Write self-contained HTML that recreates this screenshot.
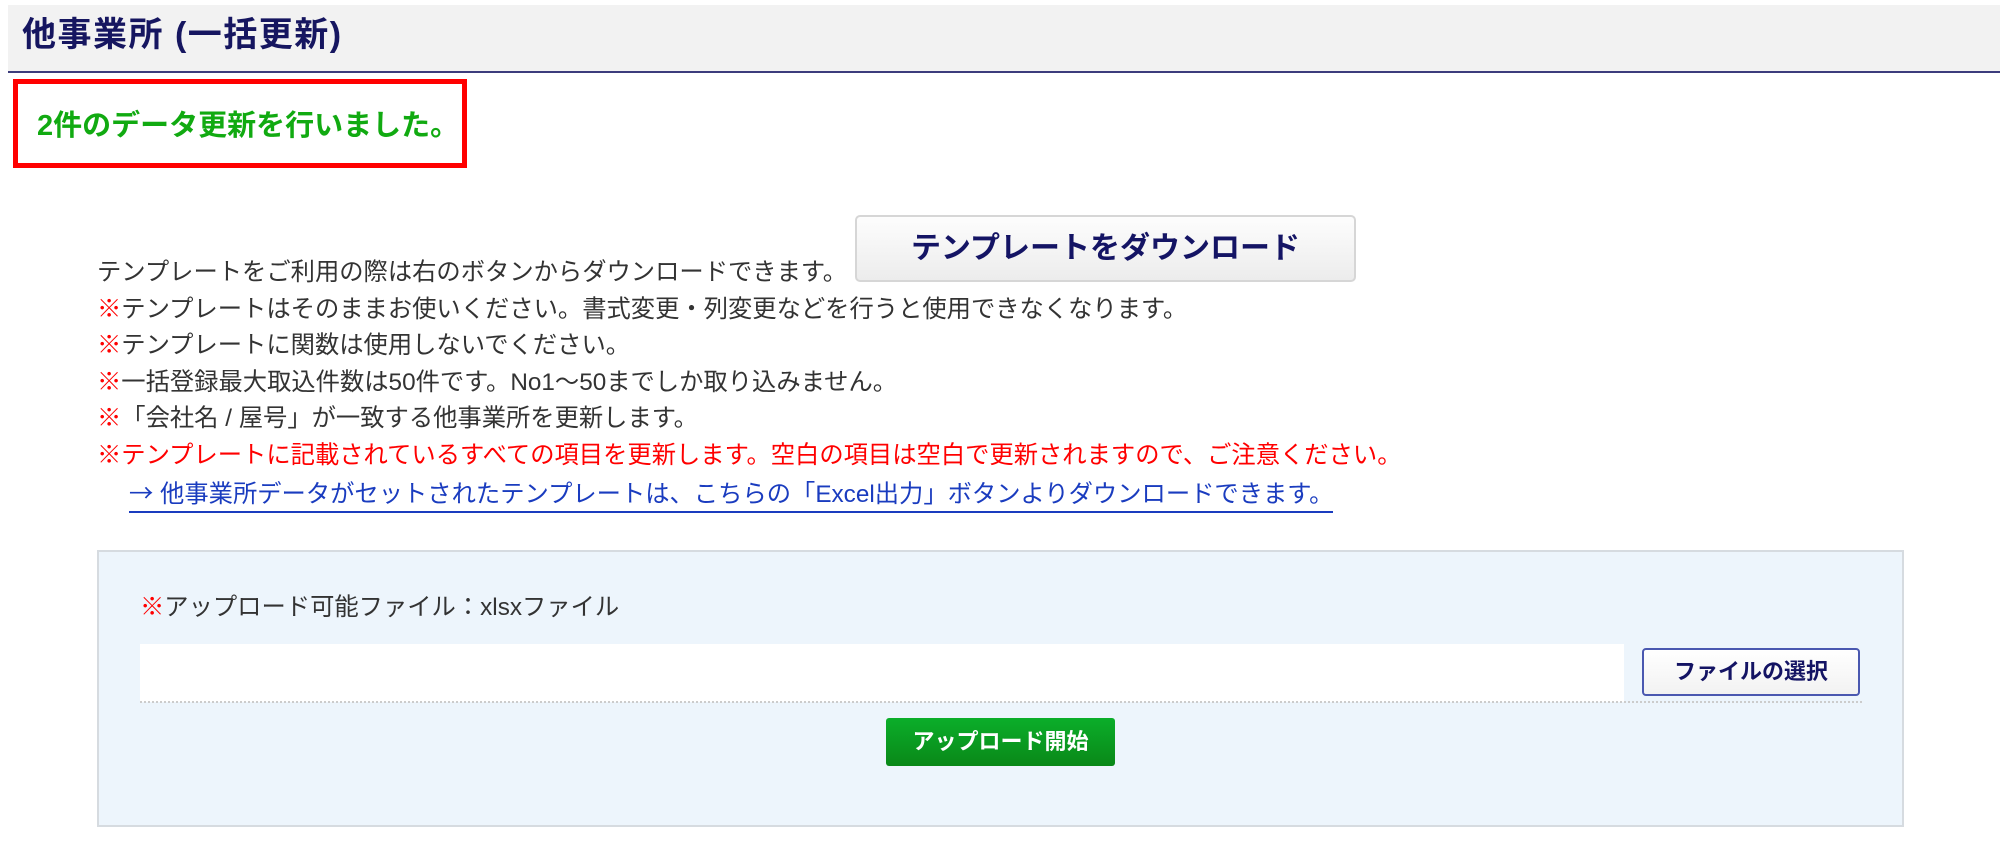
<!DOCTYPE html>
<html><head><meta charset="utf-8"><style>
*{margin:0;padding:0;box-sizing:border-box}
body{width:2000px;height:864px;background:#fff;position:relative;overflow:hidden;font-family:"Liberation Sans","Noto Sans CJK JP",sans-serif;color:#333}
.abs{position:absolute;white-space:nowrap}
#hdr{left:8px;top:5px;width:1992px;height:68px;background:#f2f2f2;border-bottom:2px solid #3c3c7c}
#title{left:22px;top:13px;font-size:34px;font-weight:bold;color:#161660;line-height:44px;letter-spacing:1.5px}
#msg{left:13px;top:79px;width:454px;height:89px;border:5px solid #f00}
#msgt{left:37px;top:106px;font-size:29px;font-weight:bold;color:#11aa11;line-height:40px}
.ln{left:97px;font-size:24.3px;line-height:36px}
.r{color:#f00}
#dl{left:855px;top:215px;width:501px;height:67px;border:2px solid #d6d6d6;border-radius:5px;background:linear-gradient(#fdfdfd,#ececec);font-size:30px;font-weight:bold;color:#141464;text-align:center;line-height:63px}
#lnk{left:129px;color:#1a3cbf;border-bottom:2px solid #1a3cbf;line-height:32px}
#box{left:97px;top:550px;width:1807px;height:277px;background:#edf5fc;border:2px solid #d6dbe0}
#inp{left:140px;top:644px;width:1484px;height:58px;background:#fff}
#dot{left:140px;top:701px;width:1722px;height:2px;border-bottom:2px dotted #ccc}
#fb{left:1642px;top:648px;width:218px;height:48px;border:2px solid #4a58b0;border-radius:4px;background:linear-gradient(#fff,#f2f2f2);font-size:22px;font-weight:bold;color:#141464;text-align:center;line-height:44px}
#up{left:886px;top:718px;width:229px;height:48px;border-radius:3px;background:linear-gradient(#0bae2a,#0a8818);color:#fff;font-size:22px;font-weight:bold;text-align:center;line-height:48px}
</style></head><body>
<div class="abs" id="hdr"></div>
<div class="abs" id="title">他事業所 (一括更新)</div>
<div class="abs" id="msg"></div>
<div class="abs" id="msgt">2件のデータ更新を行いました。</div>
<div class="abs" id="dl">テンプレートをダウンロード</div>
<div class="abs ln" style="top:255px">テンプレートをご利用の際は右のボタンからダウンロードできます。</div>
<div class="abs ln" style="top:292px"><span class="r">※</span>テンプレートはそのままお使いください。書式変更・列変更などを行うと使用できなくなります。</div>
<div class="abs ln" style="top:328px"><span class="r">※</span>テンプレートに関数は使用しないでください。</div>
<div class="abs ln" style="top:365px"><span class="r">※</span>一括登録最大取込件数は50件です。No1～50までしか取り込みません。</div>
<div class="abs ln" style="top:401px"><span class="r">※</span>「会社名 / 屋号」が一致する他事業所を更新します。</div>
<div class="abs ln r" style="top:438px">※テンプレートに記載されているすべての項目を更新します。空白の項目は空白で更新されますので、ご注意ください。</div>
<div class="abs ln" id="lnk" style="top:476px"><span style="font-family:'Noto Sans CJK JP',sans-serif">→</span> 他事業所データがセットされたテンプレートは、こちらの「Excel出力」ボタンよりダウンロードできます。</div>
<div class="abs" id="box"></div>
<div class="abs ln" style="left:140px;top:590px"><span class="r">※</span>アップロード可能ファイル：xlsxファイル</div>
<div class="abs" id="inp"></div>
<div class="abs" id="dot"></div>
<div class="abs" id="fb">ファイルの選択</div>
<div class="abs" id="up">アップロード開始</div>
</body></html>
